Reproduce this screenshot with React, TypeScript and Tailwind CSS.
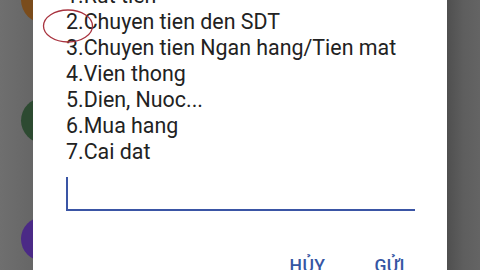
import React from "react";

const items = [
    "1.Rut tien",
    "2.Chuyen tien den SDT",
    "3.Chuyen tien Ngan hang/Tien mat",
    "4.Vien thong",
    "5.Dien, Nuoc...",
    "6.Mua hang",
    "7.Cai dat",
];

export default function App() {
    return (
        <div className="flex h-[270px] w-[480px] overflow-hidden bg-[#6b6b6b] font-['Roboto',sans-serif]">
            {/* dimmed home screen behind the dialog */}
            <div className="flex w-[33px] shrink-0 flex-col overflow-hidden bg-gradient-to-r from-[#6f6f6f] to-[#666666]">
                <div className="ml-[21px] mt-[-23px] h-[46px] w-[46px] shrink-0 rounded-full bg-[#7a4c1c]" />
                <div className="ml-[21px] mt-[75px] h-[45px] w-[45px] shrink-0 rounded-full bg-[#2d4a31]" />
                <div className="ml-[21px] mt-[74px] h-[44px] w-[44px] shrink-0 rounded-full bg-[#4b2a86]" />
            </div>

            <div className="relative flex w-[414px] shrink-0 flex-col bg-white pl-[33px]">
                <ul className="mt-[-17px] text-[21.4px] leading-[26px] text-[#222222]">
                    {items.map((item) => (
                        <li key={item}>{item}</li>
                    ))}
                </ul>

                <div className="mt-[12px] flex h-[36px] w-[349px] items-start border-b-2 border-[#3a55a5]">
                    <div className="h-[32px] w-[2px] bg-[#3a55a5]" />
                </div>

                <div className="mt-[42px] flex justify-end gap-[49px] pr-[42px] text-[17.5px] font-medium tracking-wide text-[#3556a3]">
                    <span>HỦY</span>
                    <span>GỬI</span>
                </div>

                <svg className="absolute left-[9px] top-[8px]" width="54" height="36" viewBox="0 0 54 36">
                    <ellipse cx="26" cy="18" rx="24.5" ry="16" fill="none" stroke="#a8323e" strokeWidth="1.3" />
                </svg>
            </div>

            <div className="w-[33px] shrink-0 bg-gradient-to-r from-[#4f4f4f] via-[#5e5e5e] to-[#646464]" />
        </div>
    );
}
